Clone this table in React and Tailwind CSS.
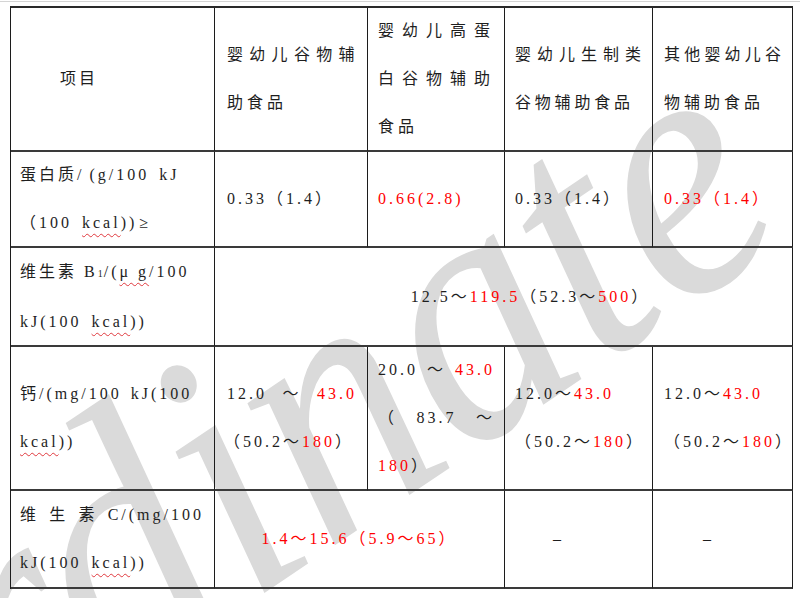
import React from "react";

const R = ({ children }) => <span className="text-[#ff0000]">{children}</span>;
const Wavy = ({ children }) => (
  <span className="underline decoration-wavy decoration-[#e0393e] decoration-1 underline-offset-[5px]">{children}</span>
);

const cell = "border-r border-b-2 border-r-[#1c1c1c] border-b-[#3a3a3a] flex flex-col justify-center";

function Line({ children, className = "" }) {
  return <div className={`whitespace-nowrap ${className}`}>{children}</div>;
}

function Spread({ parts, className = "" }) {
  return (
    <div className={`flex justify-between whitespace-nowrap ${className}`}>
      {parts.map((p, i) => (
        <span key={i}>{p}</span>
      ))}
    </div>
  );
}

export default function App() {
  return (
    <div className="relative w-[800px] h-[598px] overflow-hidden bg-white">
      {/* watermark */}
      <div className="pointer-events-none absolute left-[-440px] top-[792px] origin-[0_276px] rotate-[-34deg] scale-y-[1.1] whitespace-nowrap font-['Liberation_Serif',serif] text-[330px] italic leading-none text-[#dadada]">
        Coordinate
      </div>
      <div className="absolute left-0 top-[1px] w-[800px] border-t border-[#d4d4d4]" />

      <div className="relative ml-[10px] mt-[6px] w-[783px] border-t-2 border-l border-t-[#2a2a2a] border-l-[#1c1c1c] grid grid-cols-[204px_153px_137px_148px_140px] grid-rows-[144px_96px_99px_144px_98px] font-['Liberation_Serif','Noto_Sans_CJK_SC',serif] text-[16px] leading-[48px] tracking-[3px] text-[#1e1e1e]">
        {/* header */}
        <div className={`${cell} pl-[49px]`}>
          <Line>项目</Line>
        </div>
        <div className={`${cell} pl-[12px]`}>
          <Line className="tracking-[6.3px]">婴幼儿谷物辅</Line>
          <Line className="tracking-[4px]">助食品</Line>
        </div>
        <div className={`${cell} pl-[10px]`}>
          <Line className="tracking-[8px]">婴幼儿高蛋</Line>
          <Line className="tracking-[8px]">白谷物辅助</Line>
          <Line className="tracking-[4px]">食品</Line>
        </div>
        <div className={`${cell} pl-[10px]`}>
          <Line className="tracking-[6px]">婴幼儿生制类</Line>
          <Line className="tracking-[3.8px]">谷物辅助食品</Line>
        </div>
        <div className={`${cell} pl-[11px]`}>
          <Line className="tracking-[4.2px]">其他婴幼儿谷</Line>
          <Line className="tracking-[4px]">物辅助食品</Line>
        </div>

        {/* 蛋白质 */}
        <div className={`${cell} pl-[9px]`}>
          <Line>
            蛋白质/<span className="ml-[5px]">(</span>g/100 <span className="ml-[3px]">kJ</span>
          </Line>
          <Line>
            （100 <span className="ml-[3px]"><Wavy>kcal</Wavy></span>))<span className="ml-[2px]">≥</span>
          </Line>
        </div>
        <div className={`${cell} pl-[12px]`}>
          <Line>0.33（1.4）</Line>
        </div>
        <div className={`${cell} pl-[10px]`}>
          <Line>
            <R>0.66(2.8)</R>
          </Line>
        </div>
        <div className={`${cell} pl-[10px]`}>
          <Line>0.33（1.4）</Line>
        </div>
        <div className={`${cell} pl-[11px]`}>
          <Line>
            <R>0.33（1.4）</R>
          </Line>
        </div>

        {/* 维生素 B1 */}
        <div className={`${cell} pl-[9px]`}>
          <Line>
            维生素 B<span className="text-[10px] tracking-[1px]">1</span>/(<Wavy>μ g</Wavy>/100
          </Line>
          <Line>
            kJ(100 <span className="ml-[3px]"><Wavy>kcal</Wavy></span>))
          </Line>
        </div>
        <div className={`${cell} col-span-4 items-center pl-[54px]`}>
          <Line>
            12.5～<R>119.5</R>（52.3～<R>500</R>）
          </Line>
        </div>

        {/* 钙 */}
        <div className={`${cell} pl-[9px]`}>
          <Line>
            钙/(mg/100 <span className="ml-[2px]">kJ</span>(100
          </Line>
          <Line>
            <Wavy>kcal</Wavy>))
          </Line>
        </div>
        <div className={`${cell} pl-[12px] pr-[10px]`}>
          <Spread parts={["12.0", "～", <R key="r">43.0</R>]} />
          <Line className="-ml-[3px]">
            （50.2～<R>180</R>）
          </Line>
        </div>
        <div className={`${cell} pl-[10px] pr-[9px]`}>
          <Spread parts={["20.0", "～", <R key="r">43.0</R>]} />
          <Spread parts={["（", "83.7", "～"]} />
          <Line>
            <R>180</R>）
          </Line>
        </div>
        <div className={`${cell} pl-[10px]`}>
          <Line>
            12.0～<R>43.0</R>
          </Line>
          <Line>
            （50.2～<R>180</R>）
          </Line>
        </div>
        <div className={`${cell} pl-[11px]`}>
          <Line>
            12.0～<R>43.0</R>
          </Line>
          <Line>
            （50.2～<R>180</R>）
          </Line>
        </div>

        {/* 维生素 C */}
        <div className={`${cell} pl-[9px] pr-[10px]`}>
          <Spread parts={["维", "生", "素", "C/(mg/100"]} />
          <Line>
            kJ(100 <span className="ml-[3px]"><Wavy>kcal</Wavy></span>))
          </Line>
        </div>
        <div className={`${cell} col-span-2 items-center`}>
          <Line>
            <R>1.4～15.6（5.9～65）</R>
          </Line>
        </div>
        <div className={`${cell} items-center pr-[40px]`}>
          <Line>–</Line>
        </div>
        <div className={`${cell} items-center pr-[28px]`}>
          <Line>–</Line>
        </div>
      </div>
    </div>
  );
}
